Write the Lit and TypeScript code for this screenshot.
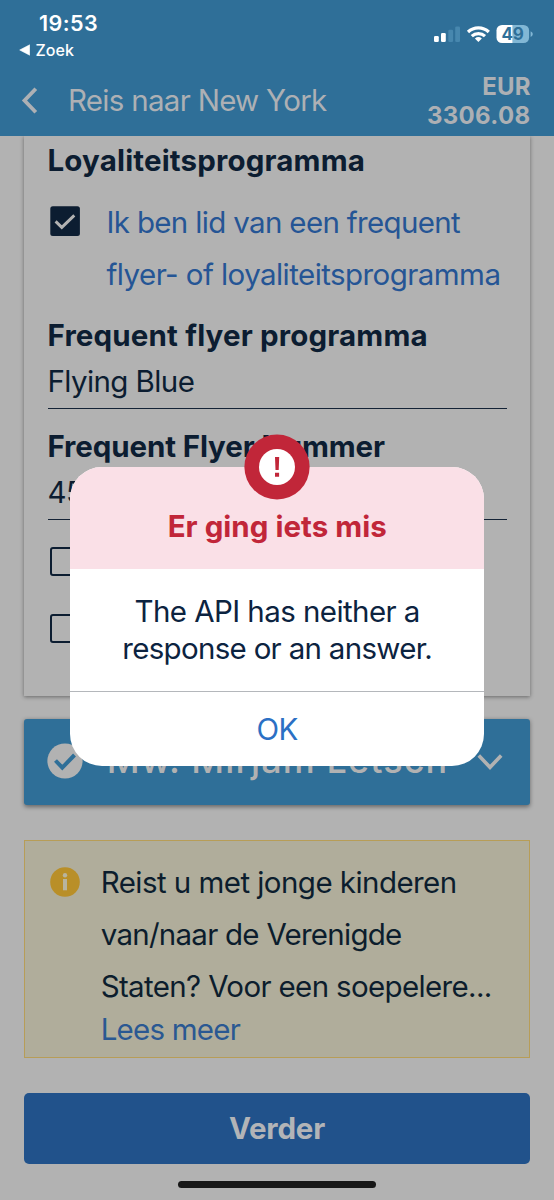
import { LitElement, html, css } from "lit";
import { customElement } from "lit/decorators.js";

@customElement("status-header")
class StatusHeader extends LitElement {
  static styles = css`
    :host { display: block; height: 136px; background: #2f6f98; color: #fff; }
    .status { display: flex; justify-content: space-between; height: 66px; }
    .time { margin: 11px 0 0 39px; font-size: 21.5px; font-weight: 600; line-height: 25px; letter-spacing: 0.45px; }
    .return { display: flex; align-items: center; gap: 6px; margin: 4px 0 0 18.5px; font-size: 16px; font-weight: 500; line-height: 20px; letter-spacing: 0.05px; }
    .system { margin: 24px 20px 0 0; }
    .nav { display: flex; color: #adb0b4; }
    .back { margin: 20px 0 0 20px; }
    .title { margin: 14px 0 0 28px; font-size: 29.5px; line-height: 40px; letter-spacing: -0.71px; flex: 1; white-space: nowrap; }
    .price { margin: 5.5px 23.5px 0 0; text-align: right; font-size: 24px; font-weight: 700; line-height: 29.5px; }
    .cur { letter-spacing: 0.1px; }
    .amount { letter-spacing: 0.35px; }
    svg { display: block; }
    .pct { font: 700 17px Inter, sans-serif; letter-spacing: -0.3px; }
  `;
  render() {
    return html`
      <div class="status">
        <div>
          <div class="time">19:53</div>
          <div class="return">
            <svg width="11" height="12" viewBox="0 0 11 12"><path d="M.7 6 10.7 .8v10.4z" fill="#fff" stroke="#fff" stroke-width=".6" stroke-linejoin="round"/></svg>
            <span>Zoek</span>
          </div>
        </div>
        <svg class="system" width="100" height="20" viewBox="434 24 100 20">
          <g fill="#fff">
            <rect x="434" y="36" width="4.8" height="6" rx="1.3"/>
            <rect x="441" y="33" width="4.8" height="9" rx="1.3"/>
          </g>
          <g fill="#4787ae">
            <rect x="448.3" y="29.8" width="4.8" height="12.2" rx="1.3"/>
            <rect x="455.2" y="26.5" width="4.8" height="15.5" rx="1.3"/>
          </g>
          <g fill="none" stroke="#fff" stroke-width="3.2">
            <path d="M468 32a15 15 0 0 1 20.8 0"/>
            <path d="M471.8 36.2a9.6 9.6 0 0 1 13.2 0"/>
          </g>
          <path d="M474.9 38.4a5.4 5.4 0 0 1 7 0l-3.5 3.6z" fill="#fff"/>
          <path d="M512.6 25h11a5.5 5.5 0 0 1 5.5 5.5v7a5.5 5.5 0 0 1-5.5 5.5h-11z" fill="#82b7d5"/>
          <path d="M512.6 25H502a5.5 5.5 0 0 0-5.5 5.5v7A5.5 5.5 0 0 0 502 43h10.6z" fill="#fff"/>
          <path d="M530.6 31.2q2.2.9 2.2 2.9t-2.2 2.9z" fill="#82b7d5"/>
          <text class="pct" x="501.6" y="40.2" fill="#2f6f98">49</text>
        </svg>
      </div>
      <div class="nav">
        <svg class="back" width="20" height="30" viewBox="20 86 20 30"><path d="M35.8 88.7 24.5 100.5l11.3 11.8" fill="none" stroke="#adb0b4" stroke-width="3.8"/></svg>
        <div class="title">Reis naar New York</div>
        <div class="price"><div class="cur">EUR</div><div class="amount">3306.08</div></div>
      </div>`;
  }
}

@customElement("loyalty-card")
class LoyaltyCard extends LitElement {
  static styles = css`
    :host { display: block; box-sizing: border-box; height: 560px; margin: 0 23.7px 0 23.5px; padding: 0 23.5px 0 24px; background: #b2b2b2; box-shadow: 0 1px 4px rgba(0, 0, 0, 0.42); clip-path: inset(0 -8px -10px -8px); color: #0c1d31; font-size: 29.5px; white-space: nowrap; }
    .heading { font-weight: 700; line-height: 49px; height: 50px; letter-spacing: 0.16px; }
    .member { display: flex; margin-top: 10px; gap: 26px; color: #255595; }
    .member svg { margin: 10px 0 0 2px; flex: none; }
    .text { line-height: 52px; letter-spacing: -0.66px; }
    .second { letter-spacing: -0.56px; }
    .label { margin-top: 17px; height: 37px; line-height: 36px; font-weight: 700; letter-spacing: 0.16px; }
    .label.number { margin-top: 19px; letter-spacing: -0.12px; }
    .field { line-height: 54px; letter-spacing: -0.6px; border-bottom: 1px solid #142336; height: 54px; }
    .box { box-sizing: border-box; width: 29px; height: 29px; border: 2px solid #0c1d31; border-radius: 3px; margin: 27px 0 0 2.5px; }
    .box + .box { margin-top: 38px; }
  `;
  render() {
    return html`
      <div class="heading">Loyaliteitsprogramma</div>
      <div class="member">
        <svg width="31" height="31" viewBox="0 0 31 31"><rect x=".3" y=".3" width="29.6" height="29.6" rx="2.5" fill="#0c1d31"/><path d="M5.6 15.4l6.2 6L24.3 9.4" fill="none" stroke="#b2b2b2" stroke-width="2.9"/></svg>
        <div class="text"><div>Ik ben lid van een frequent</div><div class="second">flyer- of loyaliteitsprogramma</div></div>
      </div>
      <div class="label">Frequent flyer programma</div>
      <div class="field">Flying Blue</div>
      <div class="label number">Frequent Flyer Nummer</div>
      <div class="field">45</div>
      <div class="box"></div>
      <div class="box"></div>`;
  }
}

@customElement("passenger-bar")
class PassengerBar extends LitElement {
  static styles = css`
    :host { display: flex; align-items: flex-start; box-sizing: border-box; height: 86px; margin: 23px 23.7px 0; background: #2f6f98; border-radius: 3px; box-shadow: 0 1.5px 4px rgba(0, 0, 0, 0.42); color: #b2b2b2; }
    .check { margin: 24px 0 0 23px; flex: none; }
    .name { margin: 16px 0 0 24px; flex: 1; font-size: 36px; font-weight: 500; line-height: 50px; letter-spacing: 1.1px; white-space: nowrap; }
    .chevron { margin: 33px 27.5px 0 0; flex: none; }
  `;
  render() {
    return html`
      <svg class="check" width="36" height="36" viewBox="0 0 36 36"><circle cx="18" cy="18" r="17.6" fill="#b2b2b2"/><path d="M8.5 17.5l6.8 7.2L27.5 12" fill="none" stroke="#2f6f98" stroke-width="4"/></svg>
      <div class="name">Mw. Mirjam Letsch</div>
      <svg class="chevron" width="26" height="20" viewBox="0 0 26 20"><path d="M1.8 3.5 13 15.3 24.2 3.5" fill="none" stroke="#b2b2b2" stroke-width="3.6"/></svg>`;
  }
}

@customElement("travel-notice")
class TravelNotice extends LitElement {
  static styles = css`
    :host { display: flex; box-sizing: border-box; height: 218px; margin: 35px 23.7px 0; padding: 15px 0 0 25px; background: #b0ad9b; border: 1px solid #b79d57; color: #0c1d2d; font-size: 29.5px; line-height: 52px; white-space: nowrap; }
    .info { margin: 10.5px 21px 0 0; flex: none; }
    .l1 { letter-spacing: -0.55px; }
    .l2 { letter-spacing: -0.74px; }
    .l3 { letter-spacing: -0.65px; }
    .more { color: #2a5892; line-height: 34px; letter-spacing: -0.77px; }
  `;
  render() {
    return html`
      <svg class="info" width="30" height="30" viewBox="0 0 30 30"><circle cx="15" cy="15" r="14.8" fill="#b98f28"/><rect x="13" y="12" width="4" height="11.3" fill="#b8b49f"/><circle cx="15" cy="8.2" r="2.2" fill="#b8b49f"/></svg>
      <div>
        <div class="l1">Reist u met jonge kinderen</div>
        <div class="l2">van/naar de Verenigde</div>
        <div class="l3">Staten? Voor een soepelere...</div>
        <div class="more">Lees meer</div>
      </div>`;
  }
}

@customElement("error-dialog")
class ErrorDialog extends LitElement {
  static styles = css`
    :host { position: absolute; left: 70.4px; top: 466.6px; width: 413.6px; height: 299.4px; border-radius: 32px; background: #fff; color: #0c2340; font-size: 29.5px; text-align: center; white-space: nowrap; }
    .badge { position: absolute; left: 173.6px; top: -33px; }
    .head { box-sizing: border-box; height: 102.4px; padding-top: 39px; border-radius: 32px 32px 0 0; background: #fae0e7; color: #c12639; font-weight: 700; line-height: 41px; letter-spacing: 0.03px; }
    .body { box-sizing: border-box; height: 123px; padding-top: 24px; line-height: 37.5px; border-bottom: 1px solid #b4b7bb; }
    .a { letter-spacing: -0.57px; }
    .b { letter-spacing: -0.69px; }
    .ok { line-height: 74px; letter-spacing: -0.5px; color: #2b70c4; }
  `;
  render() {
    return html`
      <div class="head">Er ging iets mis</div>
      <svg class="badge" width="66" height="66" viewBox="0 0 66 66"><circle cx="33" cy="33" r="32.6" fill="#c12639"/><circle cx="33" cy="33" r="18" fill="#fff"/><path d="M31 23h4.2l-.5 13h-3.2z M31 38.7h4.1v4.1H31z" fill="#c12639"/></svg>
      <div class="body"><div class="a">The API has neither a</div><div class="b">response or an answer.</div></div>
      <div class="ok">OK</div>`;
  }
}

@customElement("app-root")
class AppRoot extends LitElement {
  static styles = css`
    :host { display: block; position: relative; width: 554px; height: 1200px; overflow: hidden; background: #b2b2b2; font-family: Inter, "Liberation Sans", sans-serif; }
    .next { margin: 35.4px 23.7px 0 23.7px; height: 71px; border-radius: 5px; background: #21528b; color: #b2b4b7; font-size: 29.5px; font-weight: 700; line-height: 71px; letter-spacing: -0.2px; text-align: center; }
    .home { margin: 16.4px auto 0; width: 198px; height: 7.5px; border-radius: 4px; background: #171717; }
  `;
  render() {
    return html`
      <status-header></status-header>
      <loyalty-card></loyalty-card>
      <passenger-bar></passenger-bar>
      <travel-notice></travel-notice>
      <div class="next">Verder</div>
      <div class="home"></div>
      <error-dialog></error-dialog>`;
  }
}
